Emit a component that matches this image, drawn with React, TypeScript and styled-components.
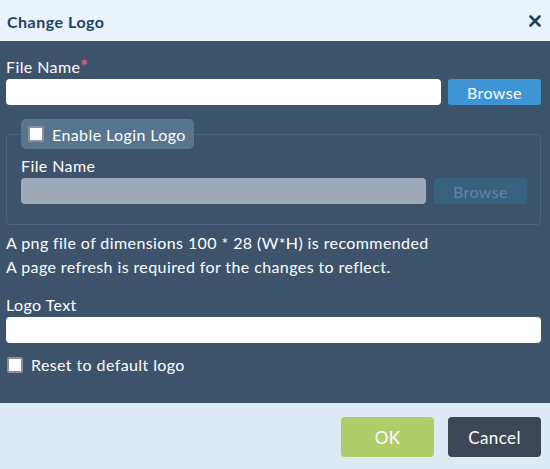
import React, { useState } from "react";
import styled, { createGlobalStyle } from "styled-components";

const GlobalStyle = createGlobalStyle`
  html, body {
    margin: 0;
    padding: 0;
    background: #deebf5;
  }
  body {
    font-family: Lato, "Open Sans", sans-serif;
    letter-spacing: 0.4px;
  }
  * {
    box-sizing: border-box;
  }
`;

const App = () => {
  const [loginLogo, setLoginLogo] = useState(false);
  const [reset, setReset] = useState(false);

  return (
    <>
      <GlobalStyle />
      <Dialog>
        <Header>
          <Title>Change Logo</Title>
          <CloseButton aria-label="Close">
            <svg width="12" height="12" viewBox="0 0 12 12">
              <path
                d="M1.5 1.5 L10.5 10.5 M10.5 1.5 L1.5 10.5"
                stroke="#1e4263"
                strokeWidth="2.6"
                strokeLinecap="round"
              />
            </svg>
          </CloseButton>
        </Header>

        <Body>
          <Label>
            File Name<Required>*</Required>
          </Label>
          <InputRow>
            <TextInput />
            <BrowseButton>Browse</BrowseButton>
          </InputRow>

          <Group>
            <Legend onClick={() => setLoginLogo(!loginLogo)}>
              <Check checked={loginLogo} />
              Enable Login Logo
            </Legend>
            <Label>File Name</Label>
            <InputRow $gap={8}>
              <TextInput disabled={!loginLogo} />
              <BrowseButton disabled={!loginLogo}>Browse</BrowseButton>
            </InputRow>
          </Group>

          <Hints>
            <div>A png file of dimensions 100 * 28 (W*H) is recommended</div>
            <div>A page refresh is required for the changes to reflect.</div>
          </Hints>

          <Label $top={16}>Logo Text</Label>
          <TextInput $full />

          <CheckRow onClick={() => setReset(!reset)}>
            <Check checked={reset} />
            Reset to default logo
          </CheckRow>
        </Body>

        <Footer>
          <FooterButton $variant="ok">OK</FooterButton>
          <FooterButton $variant="cancel">Cancel</FooterButton>
        </Footer>
      </Dialog>
    </>
  );
};

export default App;

const Check = ({ checked }: { checked: boolean }) => (
  <Box>
    {checked && (
      <svg width="10" height="10" viewBox="0 0 10 10">
        <path d="M1.5 5 L4 7.5 L8.5 2" stroke="#3d536b" strokeWidth="2" fill="none" />
      </svg>
    )}
  </Box>
);

const Dialog = styled.div`
  width: 550px;
  height: 469px;
  display: flex;
  flex-direction: column;
  background: #3d536b;
`;

const Header = styled.div`
  height: 41px;
  flex-shrink: 0;
  display: flex;
  align-items: center;
  justify-content: space-between;
  padding: 0 8px 0 7px;
  background: #eaf3fc;
`;

const Title = styled.div`
  font-size: 16px;
  font-weight: 700;
  letter-spacing: 0.5px;
  color: #1e4263;
  padding-top: 1px;
`;

const CloseButton = styled.button`
  border: 0;
  background: none;
  padding: 0;
  width: 14px;
  height: 14px;
  display: flex;
  align-items: center;
  justify-content: center;
  cursor: pointer;
`;

const Body = styled.div`
  flex: 1;
  padding: 15px 9px 0 6px;
  color: #fff;
  font-size: 16px;
`;

const Label = styled.div<{ $top?: number }>`
  font-size: 16px;
  line-height: 20px;
  color: #fff;
  margin-top: ${(p) => p.$top ?? 0}px;
  margin-bottom: 2px;
`;

const Required = styled.span`
  color: #e2606e;
  font-size: 18px;
  font-weight: 700;
`;

const InputRow = styled.div<{ $gap?: number }>`
  display: flex;
  gap: ${(p) => p.$gap ?? 7}px;
`;

const TextInput = styled.input<{ $full?: boolean }>`
  flex: 1;
  display: block;
  width: ${(p) => (p.$full ? "100%" : "auto")};
  height: 26px;
  border: 0;
  border-radius: 4px;
  background: #fff;
  outline: none;
  padding: 0 6px;
  font: inherit;
  font-size: 14px;
  &:disabled {
    background: #9eaab5;
  }
`;

const BrowseButton = styled.button`
  width: 93px;
  height: 26px;
  flex-shrink: 0;
  border: 0;
  border-radius: 3px;
  background: #3e95d6;
  color: #fff;
  font-family: Lato, sans-serif;
  font-size: 16px;
  letter-spacing: 0.4px;
  cursor: pointer;
  &:disabled {
    background: #36617f;
    color: #6484a0;
    cursor: default;
  }
`;

const Group = styled.fieldset`
  margin: 14px 0 0;
  border: 1px solid #4d6480;
  border-radius: 4px;
  padding: 7px 13px 20px 14px;
  min-width: 0;
`;

const Legend = styled.legend`
  display: flex;
  align-items: center;
  gap: 8px;
  height: 30px;
  padding: 0 8px 0 7px;
  background: #587590;
  border-radius: 5px;
  font-size: 16px;
  color: #fff;
  cursor: pointer;
`;

const Box = styled.span`
  width: 16px;
  height: 16px;
  flex-shrink: 0;
  display: inline-flex;
  align-items: center;
  justify-content: center;
  background: #fff;
  border: 2px solid #8c8f9a;
  border-radius: 2px;
`;

const Hints = styled.div`
  margin-top: 6px;
  font-size: 16px;
  line-height: 24px;
  color: #fff;
`;

const CheckRow = styled.label`
  display: flex;
  align-items: center;
  gap: 8px;
  margin-top: 12px;
  font-size: 16px;
  color: #fff;
  padding-left: 1px;
  cursor: pointer;
`;

const Footer = styled.div`
  height: 66px;
  flex-shrink: 0;
  display: flex;
  justify-content: flex-end;
  gap: 14px;
  padding: 14px 9px 0 0;
  background: #deebf5;
`;

const FooterButton = styled.button<{ $variant: "ok" | "cancel" }>`
  width: 93px;
  height: 40px;
  border: 0;
  border-radius: 4px;
  font-family: Lato, sans-serif;
  font-size: 17px;
  letter-spacing: 0.4px;
  color: #fff;
  background: ${(p) => (p.$variant === "ok" ? "#b0cd6a" : "#3d4656")};
  cursor: pointer;
`;
